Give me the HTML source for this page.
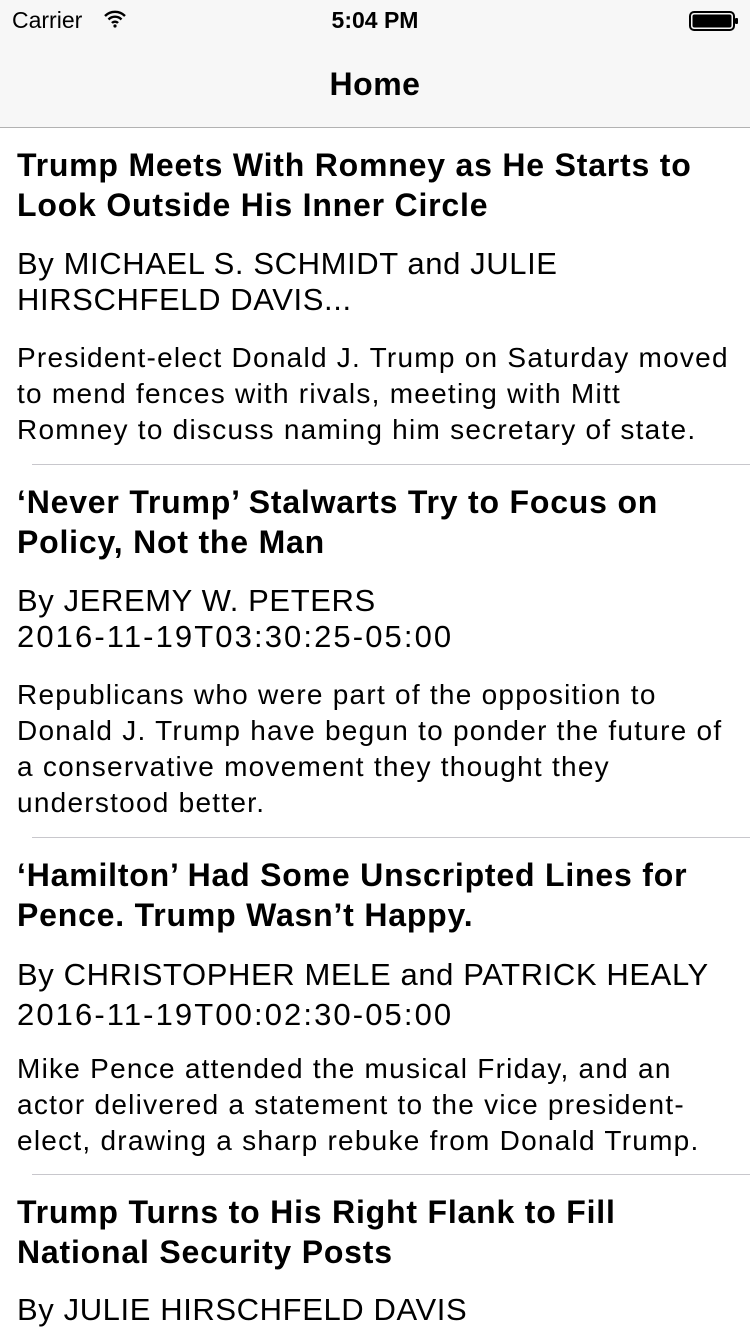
<!DOCTYPE html>
<html><head><meta charset="utf-8"><style>
*{margin:0;padding:0;box-sizing:border-box}
body{width:750px;height:1334px;overflow:hidden;background:#fff;font-family:"Liberation Sans",sans-serif;color:#000;position:relative}
.sb{position:absolute;top:0;left:0;width:750px;height:40px;background:#f7f7f7;font-size:23px}
.nav{position:absolute;top:40px;left:0;width:750px;height:88px;background:#f7f7f7;border-bottom:1px solid #b2b2b2;text-align:center;font-weight:bold;font-size:32px;line-height:88px;letter-spacing:0.5px}
.b{position:absolute;left:17px;white-space:nowrap}
.t{font-weight:bold;font-size:32px;line-height:40px;letter-spacing:0.8px}
.a{font-size:31px;line-height:36px;letter-spacing:0.6px}
.dt{letter-spacing:2.1px}
.d{font-size:28px;line-height:36px;letter-spacing:1.25px}
.sep{position:absolute;left:32px;right:0;height:1px;background:#c8c7cc}
</style></head><body>
<div class="sb">
<span style="position:absolute;left:12px;top:7px">Carrier</span>
<svg style="position:absolute;left:104px;top:10px" width="22" height="18" viewBox="0 0 22 18"><path d="M1 6a14 14 0 0 1 20 0M4.5 9.5a9 9 0 0 1 13 0M8 13a4 4 0 0 1 6 0" stroke="#000" stroke-width="2.4" fill="none"/><circle cx="11" cy="16" r="1.6"/></svg>
<span style="position:absolute;left:0;width:750px;text-align:center;top:7px;font-weight:bold">5:04 PM</span>
<svg style="position:absolute;left:689px;top:11px" width="50" height="20" viewBox="0 0 50 20"><rect x="1" y="1" width="44" height="18" rx="4" fill="none" stroke="#000" stroke-width="2"/><rect x="3.5" y="3.5" width="39" height="13" rx="2"/><rect x="46" y="7" width="3" height="6" rx="1"/></svg>
</div>
<div class="nav">Home</div>

<div class="b t" style="top:145px">Trump Meets With Romney as He Starts to<br>Look Outside His Inner Circle</div>
<div class="b a" style="top:246px">By MICHAEL S. SCHMIDT and JULIE<br>HIRSCHFELD DAVIS...</div>
<div class="b d" style="top:340px">President-elect Donald J. Trump on Saturday moved<br>to mend fences with rivals, meeting with Mitt<br>Romney to discuss naming him secretary of state.</div>
<div class="sep" style="top:464px"></div>

<div class="b t" style="top:482px">‘Never Trump’ Stalwarts Try to Focus on<br>Policy, Not the Man</div>
<div class="b a" style="top:583px">By JEREMY W. PETERS<br><span class="dt">2016-11-19T03:30:25-05:00</span></div>
<div class="b d" style="top:677px">Republicans who were part of the opposition to<br>Donald J. Trump have begun to ponder the future of<br>a conservative movement they thought they<br>understood better.</div>
<div class="sep" style="top:837px"></div>

<div class="b t" style="top:855px">‘Hamilton’ Had Some Unscripted Lines for<br>Pence. Trump Wasn’t Happy.</div>
<div class="b a" style="top:955px;line-height:40px">By CHRISTOPHER MELE and PATRICK HEALY<br><span class="dt">2016-11-19T00:02:30-05:00</span></div>
<div class="b d" style="top:1051px">Mike Pence attended the musical Friday, and an<br>actor delivered a statement to the vice president-<br>elect, drawing a sharp rebuke from Donald Trump.</div>
<div class="sep" style="top:1174px"></div>

<div class="b t" style="top:1192px">Trump Turns to His Right Flank to Fill<br>National Security Posts</div>
<div class="b a" style="top:1292px">By JULIE HIRSCHFELD DAVIS</div>
</body></html>
